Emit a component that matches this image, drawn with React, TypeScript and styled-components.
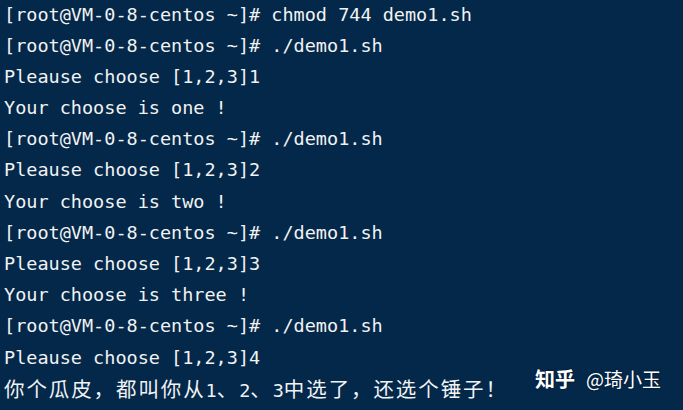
import React from "react";
import styled, { createGlobalStyle } from "styled-components";

const Global = createGlobalStyle`
  html, body { margin: 0; padding: 0; background: #03284a; }
  #root { width: 683px; height: 410px; }
`;

const Terminal = styled.div`
  position: relative;
  width: 683px;
  height: 410px;
  box-sizing: border-box;
  overflow: hidden;
  background: #03284a;
  color: #f2f2f2;
  padding: 0 0 0 4px;
  font-family: "DejaVu Sans Mono", "Liberation Mono", "Noto Sans CJK SC", monospace;
  font-size: 18.5px;
`;

const Lines = styled.div`
  margin-top: -1.5px;
`;

const Line = styled.div`
  height: 31.2px;
  line-height: 31.2px;
  white-space: pre;
`;

const Wide = styled.span`
  font-family: "Noto Sans CJK SC", sans-serif;
  font-size: 20.5px;
  letter-spacing: 1.9px;
`;

const Watermark = styled.div`
  position: absolute;
  left: 535px;
  top: 365px;
  display: flex;
  align-items: baseline;
  gap: 11px;
  font-family: "Noto Sans CJK SC", "Noto Sans", sans-serif;
  font-size: 19px;
  line-height: 28px;
  color: #ffffff;
  text-shadow: 0 0 2px rgba(0, 0, 0, 0.5);
  white-space: pre;
`;

const Brand = styled.span`
  font-weight: 700;
  font-size: 20px;
`;

const prompt = "[root@VM-0-8-centos ~]# ";

const lines: string[] = [
  prompt + "chmod 744 demo1.sh",
  prompt + "./demo1.sh",
  "Pleause choose [1,2,3]1",
  "Your choose is one !",
  prompt + "./demo1.sh",
  "Pleause choose [1,2,3]2",
  "Your choose is two !",
  prompt + "./demo1.sh",
  "Pleause choose [1,2,3]3",
  "Your choose is three !",
  prompt + "./demo1.sh",
  "Pleause choose [1,2,3]4",
];

export default function App() {
  return (
    <>
      <Global />
      <Terminal>
        <Lines>
          {lines.map((l, i) => (
            <Line key={i}>{l}</Line>
          ))}
          <Line>
            <Wide>你个瓜皮，都叫你从</Wide>1<Wide>、</Wide>2<Wide>、</Wide>3
            <Wide>中选了，还选个锤子！</Wide>
          </Line>
        </Lines>
        <Watermark>
          <Brand>知乎</Brand>
          <span>@琦小玉</span>
        </Watermark>
      </Terminal>
    </>
  );
}
